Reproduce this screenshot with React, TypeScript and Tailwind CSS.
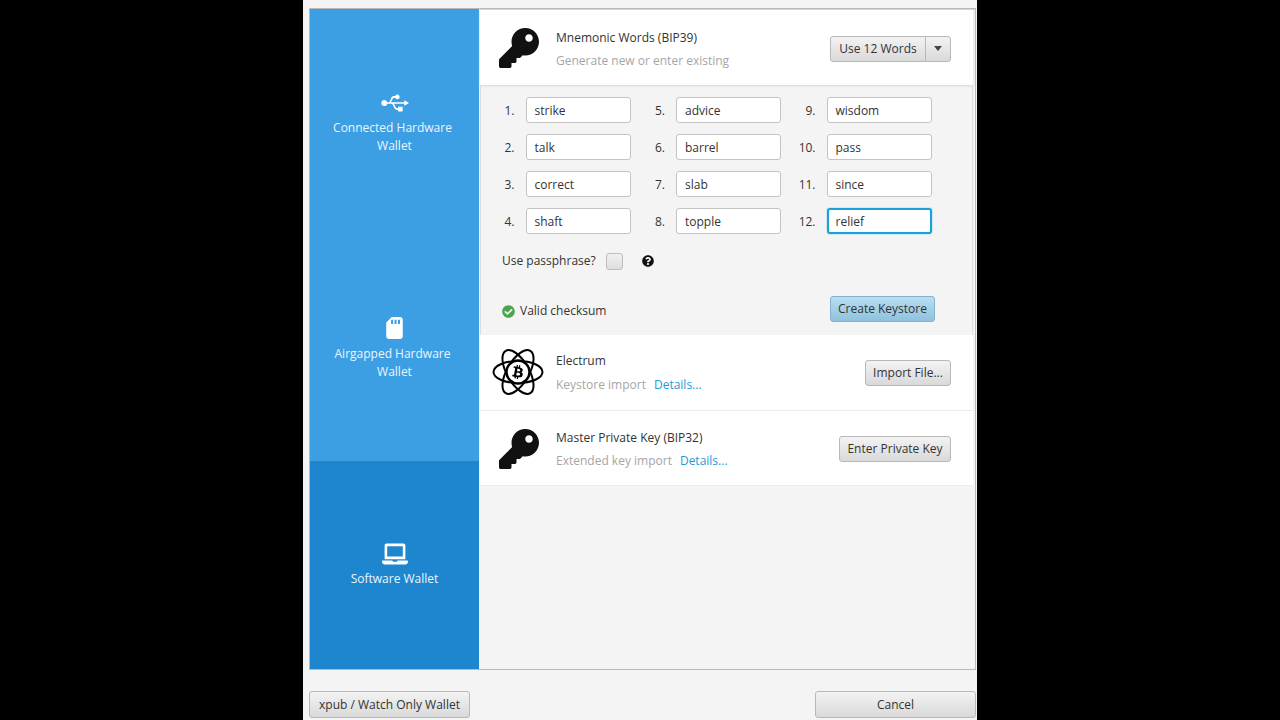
import { FaKey, FaUsb, FaSdCard, FaLaptop, FaQuestionCircle, FaCheckCircle, FaBtc } from 'react-icons/fa';

function Word({ n, value, focused }: { n: string; value: string; focused?: boolean }) {
  return (
    <div className="flex items-center h-[26px]">
      <span className="w-[35px] pr-[11px] pt-[2px] text-right">{n}</span>
      <div
        className={`w-[105px] h-[26px] pt-[2px] flex items-center rounded-[3px] bg-white ${
          focused
            ? 'border-2 border-[#1b9fd8] shadow-[0_0_0_1px_#cfe9f5] pl-[7px]'
            : 'border border-[#c4c4c4] pl-[8px]'
        }`}
      >
        {value}
      </div>
    </div>
  );
}

function Btn({ children, className = '' }: { children: React.ReactNode; className?: string }) {
  return (
    <div
      className={`h-[26px] flex items-center justify-center rounded-[3px] border border-[#b8b8b8] bg-gradient-to-b from-[#f3f3f3] to-[#d9d9d9] text-[#333] ${className}`}
    >
      {children}
    </div>
  );
}

function SideItem({ icon, label, className }: { icon: React.ReactNode; label: React.ReactNode; className: string }) {
  return (
    <div className={`flex flex-col items-center justify-center text-center text-[#eaf5fd] leading-[18px] ${className}`}>
      {icon}
      <div>{label}</div>
    </div>
  );
}

function Atom() {
  return (
    <div className="relative w-[52px] h-[48px] mb-[2px]">
      <svg viewBox="0 0 52 48" className="w-[52px] h-[48px]" fill="none" stroke="#000" strokeWidth="2">
        <ellipse cx="26" cy="24" rx="24.5" ry="11" />
        <ellipse cx="26" cy="24" rx="24.5" ry="11" transform="rotate(60 26 24)" />
        <ellipse cx="26" cy="24" rx="24.5" ry="11" transform="rotate(120 26 24)" />
        <circle cx="26" cy="24" r="11.5" fill="#fff" strokeWidth="2.4" />
      </svg>
      <FaBtc className="absolute left-[20px] top-[17px] w-[12px] h-[14px] text-black rotate-[10deg]" />
    </div>
  );
}

export default function App() {
  const cols = [
    [['1.', 'strike'], ['2.', 'talk'], ['3.', 'correct'], ['4.', 'shaft']],
    [['5.', 'advice'], ['6.', 'barrel'], ['7.', 'slab'], ['8.', 'topple']],
    [['9.', 'wisdom'], ['10.', 'pass'], ['11.', 'since'], ['12.', 'relief']],
  ];

  return (
    <div className="w-[1280px] h-[720px] bg-black flex justify-center overflow-hidden font-['Open_Sans',sans-serif] text-[12px] text-[#333]">
      <div className="w-[674px] h-[720px] bg-[#f4f4f4] pl-[6px] pr-[1px] pt-[8px] flex flex-col">
        <div className="h-[662px] flex border border-[#b9b9b9] bg-[#f4f4f4]">
          <div className="w-[169px] flex flex-col bg-[#3d9fe3]">
            <SideItem
              className="h-[226px] pt-[2px]"
              icon={<FaUsb className="w-[28px] h-[22px] text-white mb-[5px]" />}
              label={<><span className="pr-[4px]">Connected Hardware</span><br />Wallet</>}
            />
            <SideItem
              className="h-[226px] pt-[2px]"
              icon={<FaSdCard className="w-[17px] h-[22px] text-white mb-[6px]" />}
              label={<><span className="pr-[4px]">Airgapped Hardware</span><br />Wallet</>}
            />
            <SideItem
              className="flex-1 bg-[#1e86cf]"
              icon={<FaLaptop className="w-[26px] h-[22px] text-white mb-[5px]" />}
              label="Software Wallet"
            />
          </div>

          <div className="flex-1 flex flex-col ml-[1px] pr-[2px] border-t border-[#d4d4d4]">
            <div className="h-[75px] bg-white flex items-center pl-[19px] pr-[22px] pt-[2px] shadow-[0_1px_2px_#d8d8d8]">
              <FaKey className="w-[40px] h-[40px] text-[#111] mb-[2px]" />
              <div className="ml-[17px] flex-1">
                <div className="h-[24px] leading-[26px]">Mnemonic Words (BIP39)</div>
                <div className="h-[24px] leading-[24px] text-[#a6a6a6]">Generate new or enter existing</div>
              </div>
              <Btn className="w-[121px] !justify-start">
                <span className="w-[95px] text-center border-r border-[#b8b8b8] h-full leading-[24px]">Use 12 Words</span>
                <span className="flex-1 flex justify-center">
                  <span className="w-0 h-0 border-l-[4px] border-r-[4px] border-t-[5px] border-l-transparent border-r-transparent border-t-[#444]" />
                </span>
              </Btn>
            </div>

            <div className="h-[250px] border-x border-[#dcdcdc] pl-[1px] pt-[12px] flex flex-col">
              <div className="flex ml-[8.5px]">
                {cols.map((col, i) => (
                  <div key={i} className="w-[150.5px] flex flex-col gap-[11px] shrink-0">
                    {col.map(([n, v]) => (
                      <Word key={n} n={n} value={v} focused={n === '12.'} />
                    ))}
                  </div>
                ))}
              </div>
              <div className="flex items-center h-[18px] mt-[18px] pl-[20px]">
                <span>Use passphrase?</span>
                <span className="ml-[10px] w-[17px] h-[17px] rounded-[3px] border border-[#bdbdbd] bg-gradient-to-b from-[#f0f0f0] to-[#dedede]" />
                <FaQuestionCircle className="ml-[19px] w-[12px] h-[12px] text-[#111]" />
              </div>
              <div className="flex items-center justify-between mt-[26px] pl-[20px] pr-[37px]">
                <div className="flex items-center pt-[4px]">
                  <FaCheckCircle className="w-[13px] h-[13px] text-[#4aa54e]" />
                  <span className="ml-[5px]">Valid checksum</span>
                </div>
                <Btn className="w-[105px] !border-[#82b3cf] !from-[#b8def2] !to-[#8fc2de]">Create Keystore</Btn>
              </div>
            </div>

            <div className="h-[76px] bg-white flex items-center pl-[12px] pr-[22px] border-b border-[#ececec]">
              <Atom />
              <div className="ml-[12px] flex-1">
                <div className="h-[24px] leading-[24px]">Electrum</div>
                <div className="h-[24px] leading-[24px] text-[#a6a6a6]">
                  Keystore import<span className="ml-[8px] text-[#1f9bd7]">Details...</span>
                </div>
              </div>
              <Btn className="w-[86px]">Import File...</Btn>
            </div>

            <div className="h-[75px] bg-white flex items-center pl-[19px] pr-[22px] pt-[2px] border-b border-[#ececec]">
              <FaKey className="w-[40px] h-[40px] text-[#111]" />
              <div className="ml-[17px] flex-1">
                <div className="h-[24px] leading-[26px]">Master Private Key (BIP32)</div>
                <div className="h-[24px] leading-[24px] text-[#a6a6a6]">
                  Extended key import<span className="ml-[8px] text-[#1f9bd7]">Details...</span>
                </div>
              </div>
              <Btn className="w-[112px]">Enter Private Key</Btn>
            </div>
          </div>
        </div>

        <div className="flex justify-between pt-[21px]">
          <Btn className="w-[161px] !h-[27px]">xpub / Watch Only Wallet</Btn>
          <Btn className="w-[161px] !h-[27px]">Cancel</Btn>
        </div>
      </div>
    </div>
  );
}
